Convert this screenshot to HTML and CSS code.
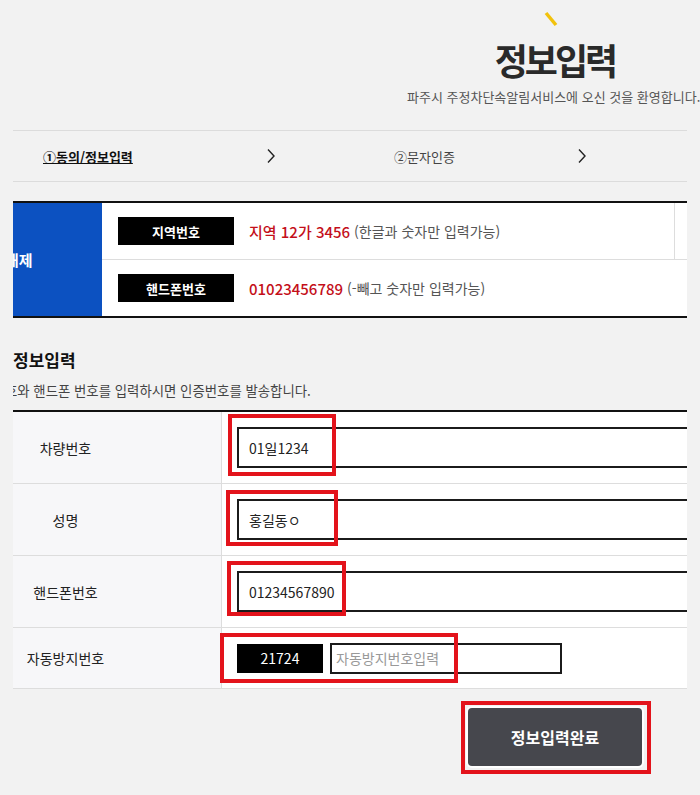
FILE: index.html
```html
<!DOCTYPE html>
<html lang="ko">
<head>
  <meta charset="UTF-8">
  <meta name="viewport" content="width=device-width, initial-scale=1.0">
  <title>정보입력</title>
  <link rel="stylesheet" href="styles.css">
</head>
<body>
  <!-- 상단 타이틀 -->
  <div class="header">
    <svg class="mark" width="14" height="16" viewBox="0 0 14 16"><line x1="2" y1="2" x2="12" y2="14" stroke="#f2c20c" stroke-width="3.5" stroke-linecap="butt"/></svg>
    <h1 class="title">정보입력</h1>
    <p class="welcome">파주시 주정차단속알림서비스에 오신 것을 환영합니다.</p>
  </div>

  <div class="wrap">
    <!-- 단계 표시 -->
    <div class="steps">
      <a class="step current">①동의/정보입력</a>
      <svg class="arrow" width="8" height="16" viewBox="0 0 8 16"><polyline points="1,1.5 7,8 1,14.5" fill="none" stroke="#222" stroke-width="1.4"/></svg>
      <span class="step second">②문자인증</span>
      <svg class="arrow" width="8" height="16" viewBox="0 0 8 16"><polyline points="1,1.5 7,8 1,14.5" fill="none" stroke="#222" stroke-width="1.4"/></svg>
    </div>

    <!-- 입력 예시 -->
    <div class="notice">
      <div class="notice-side"><span>해제</span></div>
      <div class="notice-rows">
        <div class="notice-row">
          <div class="notice-cell">
            <span class="tag">지역번호</span>
            <span class="sample">지역 12가 3456</span>
            <span class="hint">(한글과 숫자만 입력가능)</span>
          </div>
        </div>
        <div class="notice-row last">
          <div class="notice-cell">
            <span class="tag">핸드폰번호</span>
            <span class="sample">01023456789</span>
            <span class="hint">(-빼고 숫자만 입력가능)</span>
          </div>
        </div>
      </div>
    </div>

    <h3 class="sec-title">정보입력</h3>
    <p class="sec-desc">차량번호와 핸드폰 번호를 입력하시면 인증번호를 발송합니다.</p>

    <!-- 정보입력 폼 -->
    <div class="form-table">
      <div class="form-row">
        <div class="form-label">차량번호</div>
        <div class="form-field">
          <input type="text" class="field" value="01일1234">
          <span class="check check-1"></span>
        </div>
      </div>
      <div class="form-row">
        <div class="form-label">성명</div>
        <div class="form-field">
          <input type="text" class="field" value="홍길동ㅇ">
          <span class="check check-2"></span>
        </div>
      </div>
      <div class="form-row">
        <div class="form-label">핸드폰번호</div>
        <div class="form-field">
          <input type="text" class="field" value="01234567890">
          <span class="check check-3"></span>
        </div>
      </div>
      <div class="form-row short">
        <div class="form-label">자동방지번호</div>
        <div class="form-field">
          <span class="captcha">21724</span>
          <input type="text" class="captcha-input" placeholder="자동방지번호입력">
          <span class="check check-4"></span>
        </div>
      </div>
    </div>
  </div>

  <div class="actions">
    <button class="submit">정보입력완료</button>
  </div>
</body>
</html>
```

FILE: styles.css
```css
body {
  margin: 0;
  background: #f2f2f2;
  font-family: "Noto Sans CJK KR", "Noto Sans", sans-serif;
  color: #222;
  overflow: hidden;
  width: 700px;
  height: 795px;
}
.header {
  box-sizing: border-box;
  height: 130px;
  width: 296px;
  margin-left: 407px;
  padding-top: 11px;
  text-align: center;
}
.mark {
  display: block;
  margin-left: 137px;
}
.title {
  margin: 11px 0 0;
  font-size: 36px;
  line-height: 42px;
  font-weight: 700;
  color: #2a2a2a;
  letter-spacing: -3px;
}
.welcome {
  margin: 8px 0 0;
  font-size: 13px;
  line-height: 18px;
  color: #555;
  white-space: nowrap;
  text-align: left;
}
.wrap {
  margin-left: 13px;
  width: 674px;
  overflow: hidden;
}
.steps {
  display: flex;
  align-items: center;
  height: 50px;
  border-top: 1px solid #dcdcdc;
  border-bottom: 1px solid #dcdcdc;
  padding-left: 30px;
  font-size: 13px;
}
.step {
  width: 224px;
  color: #444;
}
.step.current {
  color: #111;
  font-weight: 700;
  text-decoration: underline;
}
.step.second {
  width: 184px;
  margin-left: 119px;
}
.arrow {
  display: block;
}
.notice {
  display: flex;
  margin-top: 19px;
  border-top: 2px solid #111;
  border-bottom: 2px solid #111;
  background: #fff;
}
.notice-side {
  width: 89px;
  flex-shrink: 0;
  background: #0c51c1;
  color: #fff;
  font-size: 15px;
  font-weight: 700;
  display: flex;
  align-items: center;
  white-space: nowrap;
}
.notice-side span {
  margin-left: -8px;
}
.notice-rows {
  flex: 1;
}
.notice-row {
  height: 56px;
  border-bottom: 1px solid #ddd;
  display: flex;
}
.notice-row.last {
  border-bottom: none;
}
.notice-cell {
  width: 572px;
  display: flex;
  align-items: center;
  border-right: 1px solid #ddd;
}
.notice-row.last .notice-cell {
  border-right: none;
}
.tag {
  width: 116px;
  height: 28px;
  margin-left: 16px;
  background: #000;
  color: #fff;
  font-size: 13px;
  font-weight: 700;
  display: flex;
  align-items: center;
  justify-content: center;
}
.sample {
  margin-left: 15px;
  color: #c40f1a;
  font-size: 15px;
  font-weight: 500;
}
.hint {
  margin-left: 4px;
  color: #555;
  font-size: 14px;
}
.sec-title {
  margin: 30px 0 0;
  font-size: 17px;
  line-height: 24px;
  font-weight: 700;
  color: #111;
}
.sec-desc {
  margin: 8px 0 0;
  font-size: 13.4px;
  line-height: 20px;
  color: #444;
  text-indent: -45px;
  white-space: nowrap;
}
.form-table {
  margin-top: 10px;
  margin-left: -103px;
  border-top: 2px solid #111;
}
.form-row {
  display: flex;
  height: 71px;
  border-bottom: 1px solid #ddd;
}
.form-row.short {
  height: 60px;
}
.form-label {
  width: 311px;
  flex-shrink: 0;
  background: #f7f7f9;
  border-right: 1px solid #ddd;
  display: flex;
  align-items: center;
  justify-content: center;
  font-size: 14px;
  color: #222;
}
.form-field {
  flex: 1;
  background: #fff;
  display: flex;
  align-items: center;
  position: relative;
}
.field {
  width: 480px;
  height: 41px;
  box-sizing: border-box;
  margin-left: 15px;
  border: 2px solid #1b1b1b;
  padding: 0 10px;
  font-family: inherit;
  font-size: 14px;
  color: #222;
  background: #fff;
  outline: none;
}
.captcha {
  width: 86px;
  height: 29px;
  margin-left: 15px;
  background: #000;
  color: #fff;
  font-size: 14px;
  display: flex;
  align-items: center;
  justify-content: center;
}
.captcha-input {
  width: 232px;
  height: 31px;
  box-sizing: border-box;
  margin-left: 7px;
  border: 2px solid #1b1b1b;
  padding: 0 4px;
  font-family: inherit;
  font-size: 14px;
  background: #fff;
  outline: none;
}
.captcha-input::placeholder {
  color: #999;
}
/* 빨간 강조 박스 */
.check {
  position: absolute;
  box-sizing: border-box;
  border: 4px solid #e3131b;
}
.check-1 { left: 6px; top: 2px; width: 108px; height: 62px; }
.check-2 { left: 4px; top: 6px; width: 112px; height: 56px; }
.check-3 { left: 5px; top: 5px; width: 119px; height: 55px; }
.check-4 { left: -2px; top: 5px; width: 238px; height: 50px; }
.actions {
  position: relative;
  display: inline-block;
  margin: 19px 0 0 468px;
}
.actions::after {
  content: "";
  position: absolute;
  top: -7px;
  left: -7px;
  right: -9px;
  bottom: -8px;
  border: 4px solid #e3131b;
}
.submit {
  display: block;
  width: 174px;
  height: 58px;
  border: none;
  border-radius: 4px;
  background: #46474d;
  box-shadow: 0 0 0 2px #fff;
  color: #fff;
  font-family: inherit;
  font-size: 16px;
  font-weight: 700;
  cursor: pointer;
}
```
